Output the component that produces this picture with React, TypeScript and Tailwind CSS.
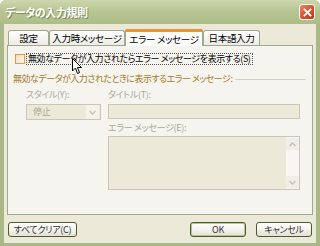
import React from "react"

const jp = "font-['Noto_Sans_CJK_JP',sans-serif] [font-feature-settings:'palt'] whitespace-nowrap"

function Tab({ label, width, active }: { label: string; width: string; active?: boolean }) {
  if (active) {
    return (
      <div
        className={`${width} relative z-10 -mb-px flex h-[17px] items-center justify-center rounded-t-[3px] border border-b-0 border-[#a0a890] bg-[#fcfcfb] text-[9.5px] tracking-[-0.3px] text-black`}
      >
        <span className="absolute -left-px -right-px -top-px h-[3px] rounded-t-[3px] bg-[#e8962e]" />
        <span className="mt-[2px]">{label}</span>
      </div>
    )
  }
  return (
    <div
      className={`${width} flex h-[15px] items-center justify-center rounded-t-[3px] border border-b-0 border-[#a0a890] bg-gradient-to-b from-white to-[#ecebe5] text-[9.5px] tracking-[-0.3px] text-black`}
    >
      {label}
    </div>
  )
}

function Chevron({ up }: { up?: boolean }) {
  return (
    <svg width="7" height="5" viewBox="0 0 7 5">
      <path d={up ? "M0.5 4 L3.5 1 L6.5 4" : "M0.5 1 L3.5 4 L6.5 1"} fill="none" stroke="#c4c2b6" strokeWidth="1.3" />
    </svg>
  )
}

function XpButton({ label, width, isDefault }: { label: string; width: string; isDefault?: boolean }) {
  return (
    <div
      className={`${width} flex h-[15px] items-center justify-center rounded-[3px] border border-[#4d5a31] bg-gradient-to-b from-white via-[#f4f3ee] to-[#e3e2d6] text-[9px] leading-[11px] tracking-[-0.3px] text-[#333] ${
        isDefault ? "shadow-[inset_0_0_0_1px_#b4c78e]" : ""
      }`}
    >
      {label}
    </div>
  )
}

export default function App() {
  return (
    <div className={`${jp} relative flex h-[246px] w-[320px] flex-col overflow-hidden rounded-t-[6px] bg-[#a9b887]`}>
      {/* title bar */}
      <div className="flex h-[24px] shrink-0 items-center justify-between bg-gradient-to-b from-[#cdd6ad] via-[#b7c490] to-[#aebd88] pl-[5px] pr-[5px]">
        <span className="text-[11px] font-bold tracking-[-0.4px] text-white [text-shadow:1px_1px_0_#7d8a5a]">データの入力規則</span>
        <div className="flex h-[16px] w-[16px] items-center justify-center rounded-[3px] border border-white bg-gradient-to-br from-[#e98a6a] via-[#d8532f] to-[#b8361a]">
          <svg width="9" height="9" viewBox="0 0 9 9">
            <path d="M1.5 1.5 L7.5 7.5 M7.5 1.5 L1.5 7.5" stroke="white" strokeWidth="1.8" strokeLinecap="square" />
          </svg>
        </div>
      </div>

      {/* body */}
      <div className="mx-[4px] mb-[3px] flex flex-1 flex-col bg-[#ece9d8] px-[3px] pb-[6px] pt-[5px]">
        {/* tabs */}
        <div className="flex h-[16px] items-end pl-[1px]">
          <Tab label="設定" width="w-[41px]" />
          <Tab label="入力時メッセージ" width="w-[76px]" />
          <Tab label="エラー メッセージ" width="w-[78px]" active />
          <Tab label="日本語入力" width="w-[57px]" />
        </div>

        {/* panel */}
        <div className="flex h-[170px] flex-col border border-[#a0a890] bg-[#f5f4ef] pl-[5px] pr-[5px] pt-[7px]">
          <div className="ml-[2px] flex h-[12px] items-center">
            <span className="h-[10px] w-[10px] shrink-0 border border-[#dd9c52] bg-gradient-to-br from-[#f3dcb4] to-[#fdf8ec]" />
            <span className="ml-[1px] border border-dotted border-[#555] px-[1px] text-[9px] leading-[10px] tracking-[-0.4px] text-black">
              無効なデータが入力されたらエラー メッセージを表示する(S)
            </span>
          </div>

          <div className="mt-[8px] flex items-center">
            <span className="text-[9px] leading-[12px] tracking-[-0.5px] text-[#a57a2a]">
              無効なデータが入力されたときに表示するエラー メッセージ:
            </span>
            <span className="ml-[3px] mr-[1px] h-px flex-1 bg-[#d0d0bf]" />
          </div>

          <div className="mt-[4px] flex">
            <div className="ml-[13px] flex w-[75px] flex-col">
              <span className="text-[9px] leading-[12px] tracking-[-0.3px] text-[#aca899]">スタイル(Y):</span>
              <div className="mt-[3px] flex h-[16px] items-center border border-[#c9c7ba] bg-[#ece9d8]">
                <span className="ml-[6px] flex-1 text-[9px] leading-[12px] text-[#aca899]">停止</span>
                <span className="mr-px flex h-[14px] w-[13px] items-center justify-center bg-[#f3f2ec]">
                  <Chevron />
                </span>
              </div>
            </div>

            <div className="ml-[7px] flex w-[192px] flex-col">
              <span className="text-[9px] leading-[12px] tracking-[-0.3px] text-[#aca899]">タイトル(T):</span>
              <div className="mt-[3px] h-[15px] border border-[#c9c7ba] bg-[#ece9d8]" />
              <span className="mt-[3px] text-[9px] leading-[12px] tracking-[-0.3px] text-[#aca899]">エラー メッセージ(E):</span>
              <div className="mt-[2px] flex h-[54px] justify-end border border-[#c9c7ba] bg-[#ece9d8]">
                <div className="flex w-[13px] flex-col justify-between bg-[#f7f6f2] py-px">
                  <span className="flex h-[12px] items-center justify-center bg-[#efeee8]">
                    <Chevron up />
                  </span>
                  <span className="flex h-[12px] items-center justify-center bg-[#efeee8]">
                    <Chevron />
                  </span>
                </div>
              </div>
            </div>
          </div>
        </div>

        {/* buttons */}
        <div className="mt-[7px] flex items-center pl-[1px] pr-[1px]">
          <XpButton label="すべてクリア(C)" width="w-[69px]" />
          <span className="flex-1" />
          <XpButton label="OK" width="w-[56px]" isDefault />
          <span className="w-[10px]" />
          <XpButton label="キャンセル" width="w-[56px]" />
        </div>
      </div>

      {/* mouse pointer */}
      <svg className="absolute left-[72px] top-[58px]" width="11" height="17" viewBox="0 0 11 17">
        <path d="M0.5 0.5 L0.5 13 L3.5 10 L5.5 15.5 L7.5 14.5 L5.5 9.5 L9.5 9.5 Z" fill="white" stroke="black" strokeWidth="1" strokeLinejoin="round" />
      </svg>
    </div>
  )
}
